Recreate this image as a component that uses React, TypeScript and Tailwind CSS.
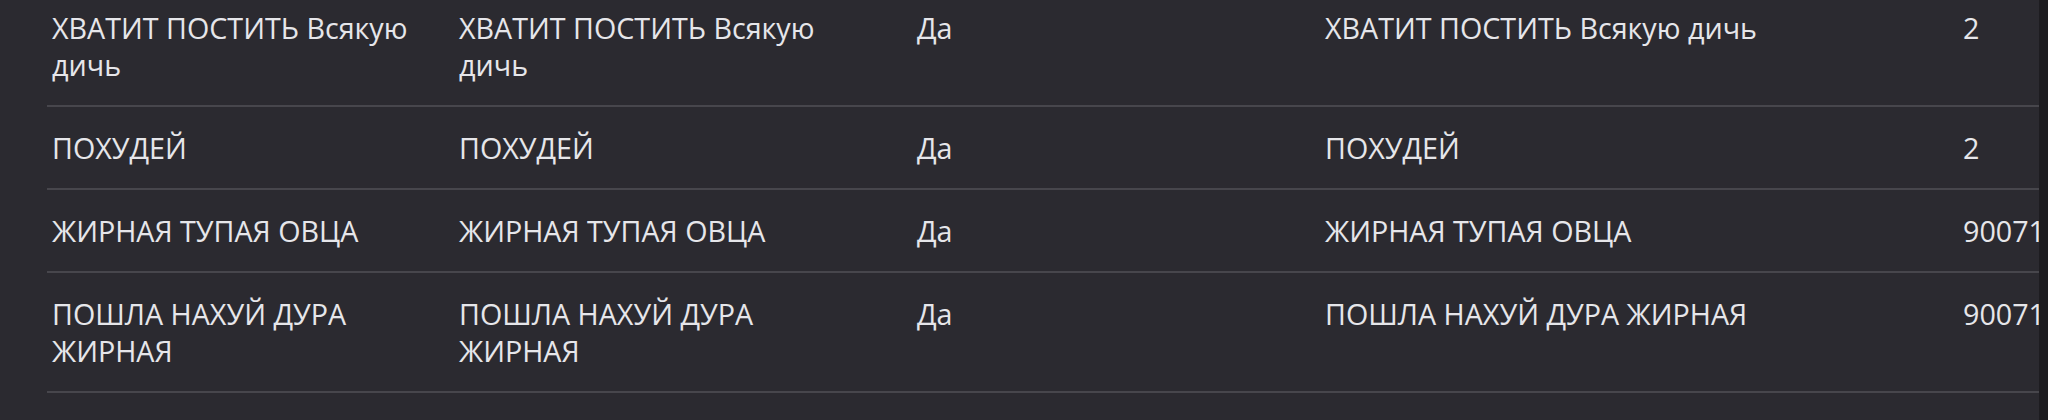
import React from 'react'

type Row = { a: string; b: string; c: string; d: string; e: string }

const rows: Row[] = [
  { a: 'ХВАТИТ ПОСТИТЬ Всякую дичь', b: 'ХВАТИТ ПОСТИТЬ Всякую дичь', c: 'Да', d: 'ХВАТИТ ПОСТИТЬ Всякую дичь', e: '2' },
  { a: 'ПОХУДЕЙ', b: 'ПОХУДЕЙ', c: 'Да', d: 'ПОХУДЕЙ', e: '2' },
  { a: 'ЖИРНАЯ ТУПАЯ ОВЦА', b: 'ЖИРНАЯ ТУПАЯ ОВЦА', c: 'Да', d: 'ЖИРНАЯ ТУПАЯ ОВЦА', e: '9007199254740991' },
  { a: 'ПОШЛА НАХУЙ ДУРА ЖИРНАЯ', b: 'ПОШЛА НАХУЙ ДУРА ЖИРНАЯ', c: 'Да', d: 'ПОШЛА НАХУЙ ДУРА ЖИРНАЯ', e: '9007199254740991' },
]

export default function App() {
  return (
    <div
      className="flex h-[420px] w-full overflow-hidden bg-[#2b2a30] text-[#e6e6ea]"
      style={{ fontFamily: '"Open Sans", "Noto Sans", sans-serif' }}
    >
      {/* таблица */}
      <div className="flex-1 overflow-hidden pl-[47px]">
        <div className="-mt-[13px]">
          {rows.map((r, i) => (
            <div
              key={i}
              className="grid grid-cols-[407px_458px_408px_638px_1fr] border-b-2 border-[#47464c] py-[22px] text-[28.7px] leading-[37px]"
            >
              <div className="pl-[5px] pr-[20px]">{r.a}</div>
              <div className="pl-[5px] pr-[50px]">{r.b}</div>
              <div className="pl-[5px]">{r.c}</div>
              <div className="pl-[5px]">{r.d}</div>
              <div className="overflow-hidden whitespace-nowrap pl-[5px]">{r.e}</div>
            </div>
          ))}
        </div>
      </div>
      <div className="w-[9px] bg-[#1d1c20]" />
    </div>
  )
}
